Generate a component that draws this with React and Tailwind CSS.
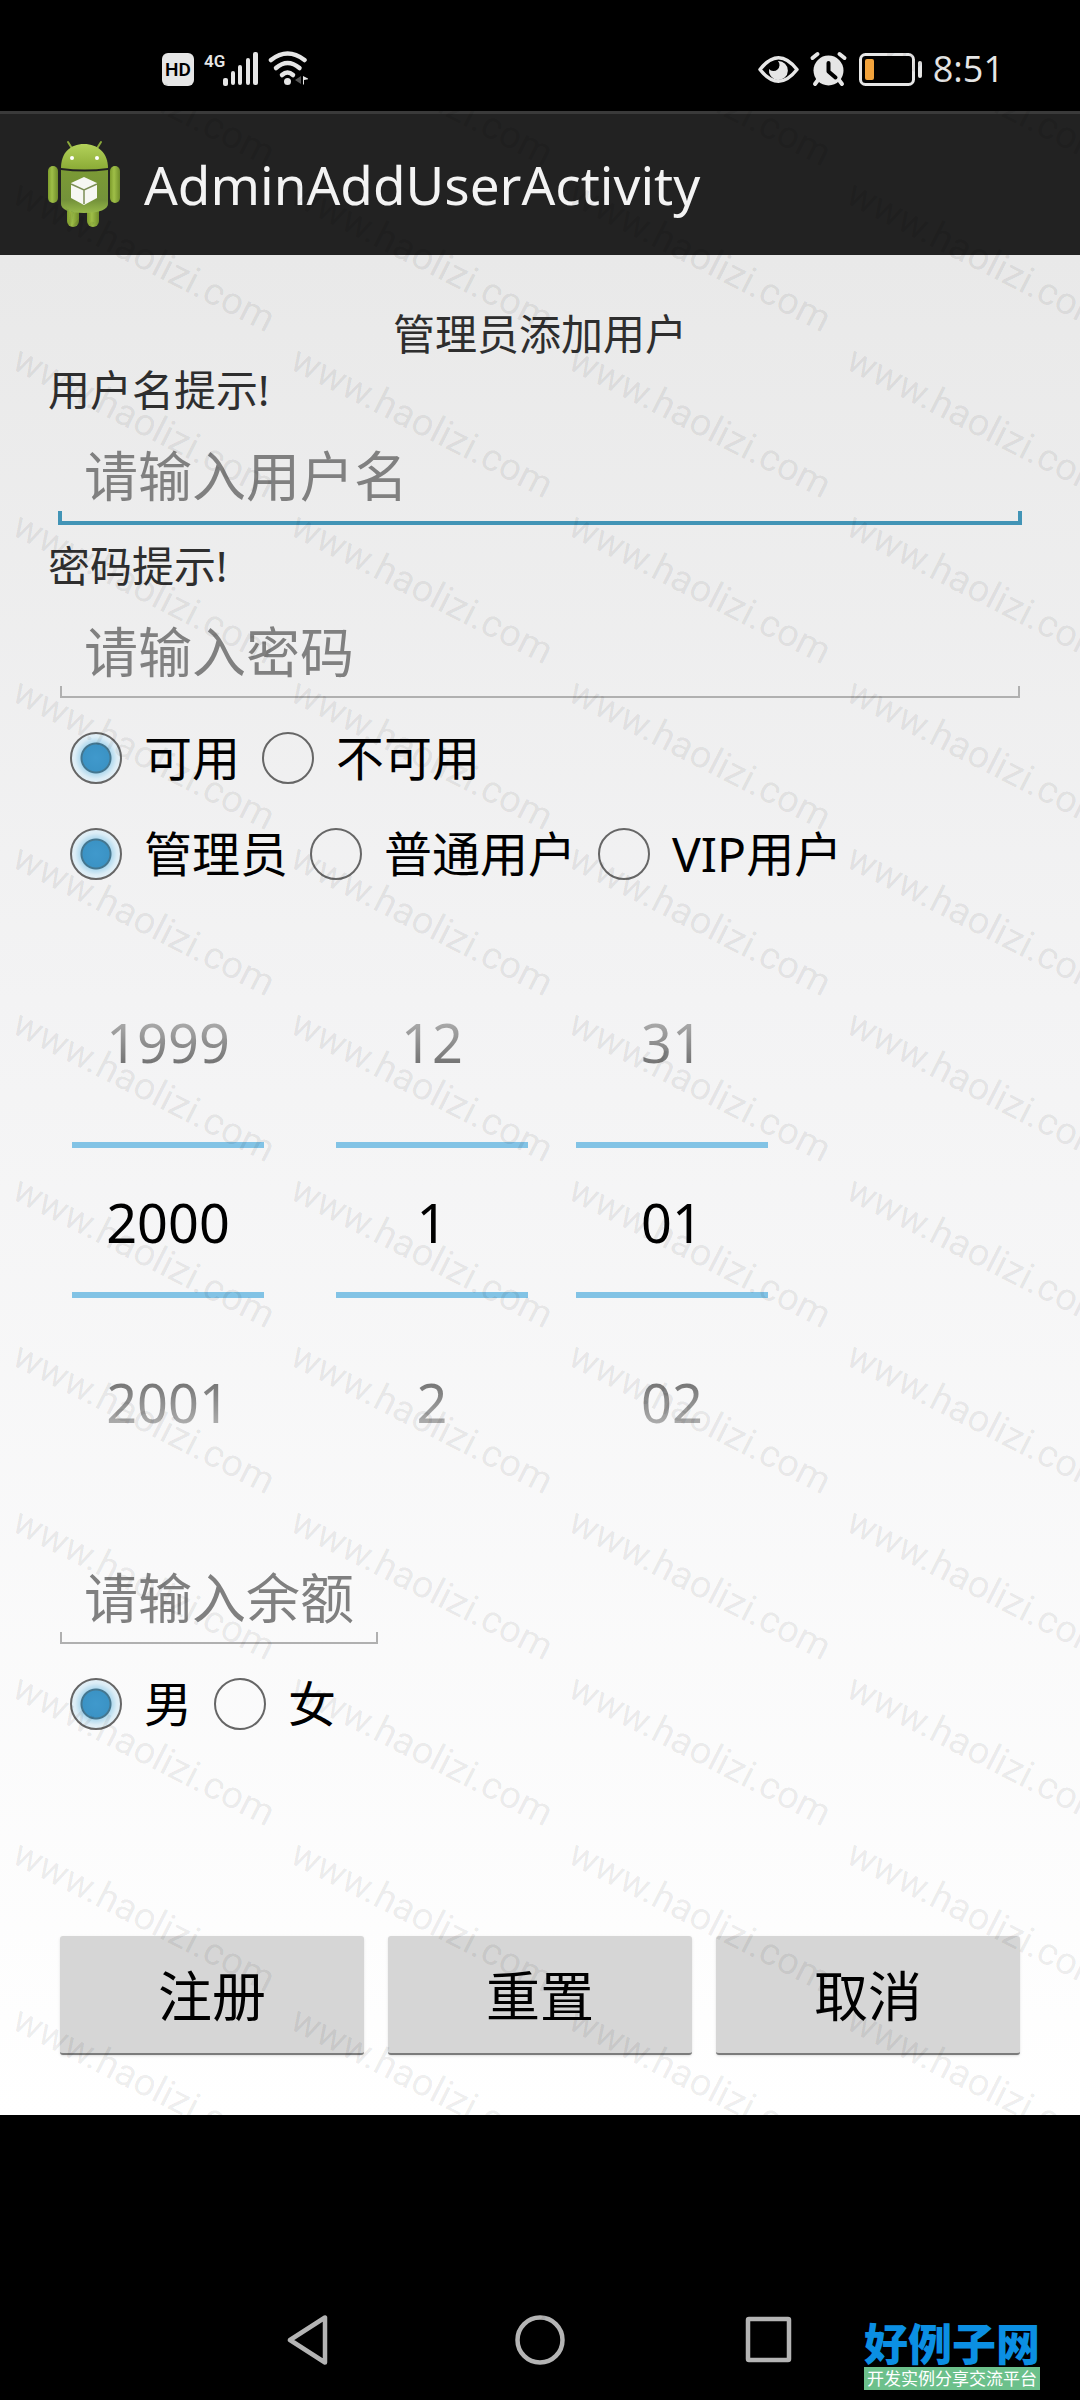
import { useState } from 'react';

const YEARS = ['1999', '2000', '2001'];
const MONTHS = ['12', '1', '2'];
const DAYS = ['31', '01', '02'];

function StatusBar() {
  return (
    <header className="flex h-[111px] items-center justify-between bg-black px-20 pt-[27px] text-[#e6e6e6]">
      <div className="flex items-center pl-20">
        <svg width="148" height="36" viewBox="160 50 148 36" fill="#e6e6e6" aria-hidden="true">
          <rect x="162" y="52" width="32" height="33" rx="6" />
          <text x="178" y="75" textAnchor="middle" fontSize="19" fontWeight="600" fill="#000" fontFamily="Roboto, sans-serif">HD</text>
          <text x="204" y="66" fontSize="17" fontWeight="600" fontFamily="'Liberation Sans Narrow', Roboto, sans-serif">4G</text>
          <rect x="223" y="77" width="5" height="8" rx="2" />
          <rect x="231" y="70" width="4" height="14" rx="2" />
          <rect x="238" y="64" width="4" height="20" rx="2" />
          <rect x="246" y="57" width="4" height="27" rx="2" />
          <rect x="253" y="51" width="5" height="33" rx="2" />
          <g fill="none" stroke="#e6e6e6" strokeWidth="4.5" strokeLinecap="round">
            <path d="M271 59 Q287.500 46 304.500 59" />
            <path d="M276 67 Q287.500 57 299.500 67" />
            <path d="M282 74 Q287.500 69 293 74" />
          </g>
          <circle cx="287.500" cy="80.500" r="3.500" />
          <path d="M301 75v8l-6-4z" fill="#555" />
          <path d="M303 75v9l1-1v-4l5-1z" />
        </svg>
      </div>
      <div className="flex items-center">
        <svg width="166" height="36" viewBox="757 50 166 36" fill="#e6e6e6" aria-hidden="true">
          <path d="M760 68.500 Q778.500 45 797 68.500 Q778.500 92 760 68.500z" fill="none" stroke="#e6e6e6" strokeWidth="3.500" strokeLinejoin="round" />
          <path d="M778 60a9.500 9.500 0 1 1-9 8a5.500 5.500 0 0 0 9-8z" />
          <circle cx="828.500" cy="69.500" r="15" />
          <path d="M812.500 57l5-4M844.500 57l-5-4" stroke="#e6e6e6" strokeWidth="4" strokeLinecap="round" />
          <path d="M818 79l-3 4M839 79l3 4" stroke="#e6e6e6" strokeWidth="4" strokeLinecap="round" />
          <path d="M828.500 62v8.500l7 6" fill="none" stroke="#000" strokeWidth="4" strokeLinecap="round" strokeLinejoin="round" />
          <rect x="860.500" y="53.500" width="53" height="30" rx="5" fill="none" stroke="#e6e6e6" strokeWidth="3" />
          <rect x="865" y="58" width="9" height="21" rx="2" fill="#f2a33c" />
          <rect x="918" y="60" width="4" height="17" rx="2" />
        </svg>
        <span className="-mr-1 ml-[10px] font-['Open_Sans'] text-[36px] leading-none">8:51</span>
      </div>
    </header>
  );
}

function RobotIcon() {
  return (
    <svg width="96" height="96" viewBox="36 136 96 96" aria-hidden="true">
      <defs>
        <linearGradient id="skin" x1="0" x2="1">
          <stop offset="0" stopColor="#7d9c2c" />
          <stop offset="0.4" stopColor="#9fbf48" />
          <stop offset="1" stopColor="#6f8c2a" />
        </linearGradient>
        <linearGradient id="dome" x1="0" x2="0" y1="0" y2="1">
          <stop offset="0" stopColor="#b3d15a" />
          <stop offset="1" stopColor="#8bab36" />
        </linearGradient>
        <linearGradient id="torso" x1="0" x2="0" y1="0" y2="1">
          <stop offset="0" stopColor="#7b9a35" />
          <stop offset="0.7" stopColor="#74923a" />
          <stop offset="1" stopColor="#97b94a" />
        </linearGradient>
      </defs>
      <path d="M68 141l5 8M101 141l-5 8" stroke="#8aa83a" strokeWidth="2" strokeLinecap="round" />
      <rect x="67" y="204" width="12" height="22" rx="6" fill="url(#skin)" />
      <rect x="87" y="204" width="12" height="22" rx="6" fill="url(#skin)" />
      <rect x="48" y="165" width="10" height="37" rx="5" fill="url(#skin)" />
      <rect x="110" y="165" width="10" height="37" rx="5" fill="url(#skin)" />
      <path d="M61 167c0-15 9-24 23-24s24 9 24 24q-23 3-47 0z" fill="url(#dome)" />
      <path d="M61 169q23 3 47 0v34c0 5-8 9-24 9s-23-4-23-9z" fill="url(#torso)" />
      <circle cx="72" cy="157" r="2" fill="#fff" />
      <circle cx="97" cy="157" r="2" fill="#fff" />
      <path d="M84 176l13 6v15l-13 7-13-7v-15z" fill="#f6f7f2" />
      <path d="M71 183l13 6 13-6M84 189v14" fill="none" stroke="#7c8f55" strokeWidth="1.500" />
    </svg>
  );
}

function Field({ id, label, placeholder, type = 'text', focused }) {
  return (
    <div className="flex flex-col">
      {label && (
        <label htmlFor={id} className="text-[42px] leading-[56px] text-[#2e2e2e]">{label}</label>
      )}
      <div className="relative">
        <input
          id={id}
          type={type}
          placeholder={placeholder}
          aria-label={label ? undefined : placeholder}
          className="block h-[116px] w-full bg-transparent px-9 text-[54px] text-black outline-none placeholder:text-[#808080] placeholder:opacity-100"
        />
        {focused ? (
          <span className="pointer-events-none absolute inset-x-[10px] bottom-[9px] h-[14px] border-x-4 border-b-4 border-[#4294b6]" />
        ) : (
          <span className="pointer-events-none absolute inset-x-3 bottom-3 h-3 border-x-2 border-b-2 border-[#b0b0b0]" />
        )}
      </div>
    </div>
  );
}

function RadioRow({ name, legend, options }) {
  const [value, setValue] = useState(options[0]);
  return (
    <div role="radiogroup" aria-label={legend} className="flex">
      {options.map((option) => (
        <label key={option} className="flex h-24 items-center text-[48px] leading-none text-black">
          <input
            type="radio"
            name={name}
            checked={value === option}
            onChange={() => setValue(option)}
            className="mx-[22px] h-[52px] w-[52px] appearance-none rounded-full border-2 border-[#666] checked:bg-[radial-gradient(circle,#4099cc_0,#3b93c5_13px,#44768f_14px,#44768f_15px,#b4dbef_16px,#dcedf6_21px,#e6f1f7_26px)]"
          />
          {option}
        </label>
      ))}
    </div>
  );
}

function NumberPicker({ label, values }) {
  const [prev, current, next] = values;
  return (
    <div role="group" aria-label={label} className="flex w-48 flex-col items-stretch font-['Noto_Sans'] text-[54px]">
      <button type="button" className="flex h-[204px] items-center justify-center pt-1">
        <span className="bg-gradient-to-b from-[#b0b0b0] from-20% to-[#707070] to-80% bg-clip-text text-transparent">{prev}</span>
      </button>
      <input
        aria-label={label}
        defaultValue={current}
        className="block h-[156px] w-full border-y-[6px] border-[#82c3e5] bg-transparent pt-1 text-center text-black outline-none"
      />
      <button type="button" className="flex h-[204px] items-center justify-center pt-1">
        <span className="bg-gradient-to-b from-[#707070] from-20% to-[#b0b0b0] to-80% bg-clip-text text-transparent">{next}</span>
      </button>
    </div>
  );
}

function Watermark() {
  const marks = [];
  for (let row = 0; row < 14; row++) {
    for (let col = 0; col < 4; col++) {
      marks.push({ x: 10 + col * 278, y: 36 + row * 166 });
    }
  }
  return (
    <svg className="pointer-events-none absolute inset-0 h-full w-full" aria-hidden="true">
      {marks.map(({ x, y }) => (
        <text
          key={`${x}-${y}`}
          transform={`translate(${x} ${y}) rotate(27)`}
          fontSize="38"
          fontFamily="Roboto, sans-serif"
          fill="#000"
          fillOpacity="0.08"
        >
          www.haolizi.com
        </text>
      ))}
    </svg>
  );
}

export default function App() {
  return (
    <div className="relative flex min-h-screen flex-col overflow-hidden bg-black font-['Noto_Sans','Noto_Sans_CJK_SC',sans-serif]">
      <StatusBar />

      <div className="flex h-36 items-center border-t-[3px] border-[#3a3a3a] bg-[#222] pl-9">
        <RobotIcon />
        <h1 className="ml-3 text-[53px] leading-none text-[#f3f3f3]">AdminAddUserActivity</h1>
      </div>

      <form
        onSubmit={(e) => e.preventDefault()}
        className="flex flex-col bg-gradient-to-b from-[#e9e9e9] via-[#f3f3f4] via-40% to-[#ffffff] px-12 pt-[50px] pb-[60px]"
      >
        <h2 className="text-center text-[42px] leading-[57px] text-[#2e2e2e]">管理员添加用户</h2>
        <div className="flex flex-col gap-1">
          <Field id="username" label="用户名提示!" placeholder="请输入用户名" focused />
          <Field id="password" label="密码提示!" placeholder="请输入密码" type="password" />
        </div>
        <RadioRow name="enabled" legend="状态" options={['可用', '不可用']} />
        <RadioRow name="role" legend="角色" options={['管理员', '普通用户', 'VIP用户']} />

        <div className="mt-9 mb-[38px] flex pl-6">
          <NumberPicker label="年" values={YEARS} />
          <div className="ml-[72px] flex gap-12">
            <NumberPicker label="月" values={MONTHS} />
            <NumberPicker label="日" values={DAYS} />
          </div>
        </div>

        <div className="w-[342px]">
          <Field id="balance" placeholder="请输入余额" />
        </div>
        <RadioRow name="gender" legend="性别" options={['男', '女']} />

        <div className="mt-[184px] flex gap-6 px-3">
          {['注册', '重置', '取消'].map((text) => (
            <button
              key={text}
              type="button"
              className="h-[119px] flex-1 rounded-[3px] border-b-2 border-[#7c7c7c] bg-[#d6d6d6] pt-1 text-[54px] text-black shadow-sm"
            >
              {text}
            </button>
          ))}
        </div>
      </form>

      <nav className="mt-auto flex h-[120px] items-center justify-center gap-[180px]">
        <button type="button" aria-label="返回">
          <svg width="50" height="50" viewBox="0 0 50 50" fill="none" stroke="#b4b4b4" strokeWidth="4.500" strokeLinejoin="round">
            <path d="M40 2.500v45L5 25z" />
          </svg>
        </button>
        <button type="button" aria-label="主页">
          <svg width="50" height="50" viewBox="0 0 50 50" fill="none" stroke="#b4b4b4" strokeWidth="4.500">
            <circle cx="25" cy="25" r="22.500" />
          </svg>
        </button>
        <button type="button" aria-label="最近任务">
          <svg width="50" height="50" viewBox="0 0 50 50" fill="none" stroke="#b4b4b4" strokeWidth="4.500" strokeLinejoin="round">
            <rect x="3" y="4" width="41" height="41" rx="1" />
          </svg>
        </button>
      </nav>

      <div className="absolute right-10 bottom-[10px] flex w-44 flex-col items-center whitespace-nowrap">
        <span className="text-[44px] leading-[46px] font-black text-[#0b8fe3]">好例子网</span>
        <span className="w-full bg-[#6cc08b] text-center text-[17px] leading-[23px] text-white">开发实例分享交流平台</span>
      </div>

      <Watermark />
    </div>
  );
}
